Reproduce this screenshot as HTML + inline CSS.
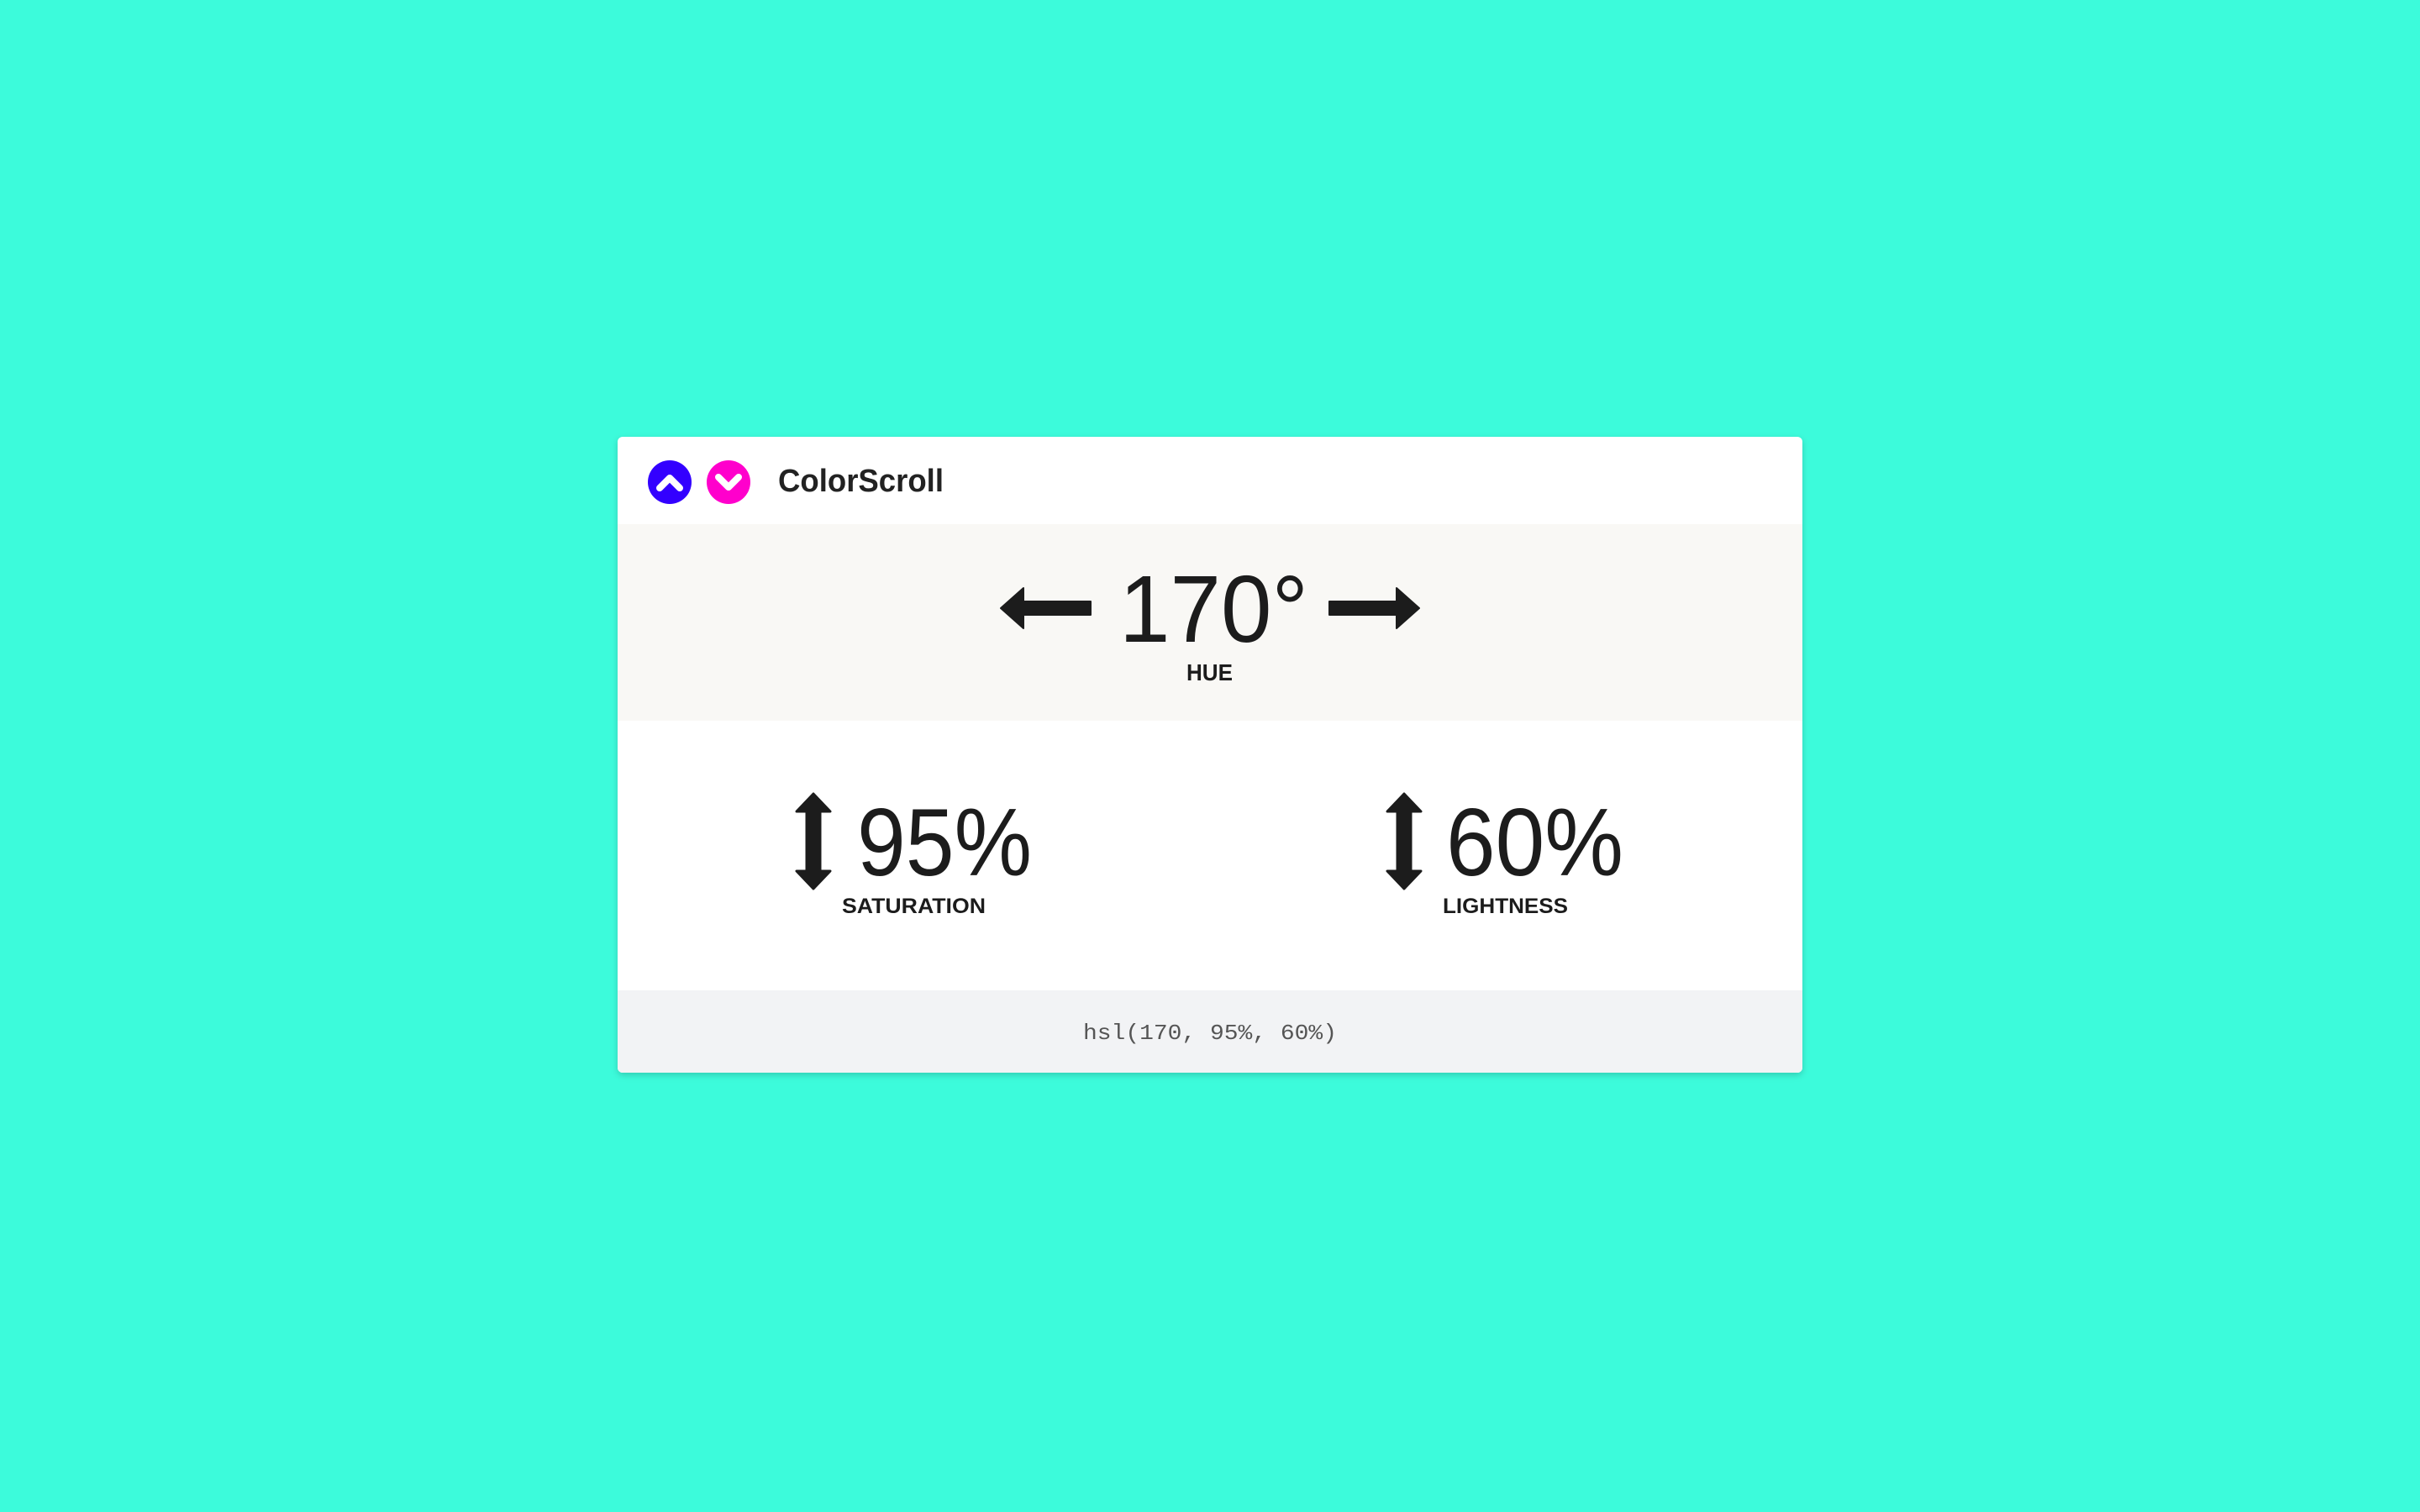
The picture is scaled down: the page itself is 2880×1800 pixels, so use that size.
<!DOCTYPE html>
<html><head><meta charset="utf-8"><style>
html,body{margin:0;padding:0;width:2880px;height:1800px;overflow:hidden;background:#3cfbdb}
</style></head><body>
<svg width="2880" height="1800" viewBox="0 0 2880 1800" xmlns="http://www.w3.org/2000/svg" style="position:absolute;left:0;top:0">
<defs><filter id="sh" x="-5%" y="-5%" width="110%" height="115%"><feDropShadow dx="0" dy="3" stdDeviation="4" flood-color="#000" flood-opacity="0.18"/></filter>
<clipPath id="cc"><rect x="735" y="520" width="1410" height="757" rx="6"/></clipPath></defs>
<rect x="735" y="520" width="1410" height="757" rx="6" fill="#fff" filter="url(#sh)"/>
<g clip-path="url(#cc)">
<rect x="735" y="624" width="1410" height="234" fill="#f9f8f5"/>
<rect x="735" y="1179" width="1410" height="98" fill="#f2f3f5"/>
</g>
<circle cx="797" cy="574" r="26" fill="#3300ff"/>
<path d="M785 581 L797 569 L809 581" stroke="#fff" stroke-width="8" fill="none" stroke-linecap="round" stroke-linejoin="round"/>
<circle cx="867" cy="574" r="26" fill="#ff00cc"/>
<path d="M855 568 L867 580 L879 568" stroke="#fff" stroke-width="8" fill="none" stroke-linecap="round" stroke-linejoin="round"/>
<text x="926" y="585" font-family="Liberation Sans, sans-serif" font-weight="bold" font-size="38" fill="#222" textLength="197" lengthAdjust="spacingAndGlyphs">ColorScroll</text>
<!-- hue arrows -->
<path d="M1191 724 L1218 700 L1218 716 L1298 716 L1298 732 L1218 732 L1218 748 Z" fill="#1c1c1c" stroke="#1c1c1c" stroke-width="2" stroke-linejoin="round"/>
<path d="M1689 724 L1662 700 L1662 716 L1582 716 L1582 732 L1662 732 L1662 748 Z" fill="#1c1c1c" stroke="#1c1c1c" stroke-width="2" stroke-linejoin="round"/>
<text x="1332" y="764" font-family="Liberation Sans, sans-serif" font-size="113" fill="#1c1c1c" textLength="225" lengthAdjust="spacingAndGlyphs">170°</text>
<text x="1412" y="810" font-family="Liberation Sans, sans-serif" font-weight="bold" font-size="28" fill="#1c1c1c" textLength="55" lengthAdjust="spacingAndGlyphs">HUE</text>
<!-- saturation -->
<path d="M968 945 L988 966 L976 966 L976 1037 L988 1037 L968 1058 L948 1037 L960 1037 L960 966 L948 966 Z" fill="#1c1c1c" stroke="#1c1c1c" stroke-width="3" stroke-linejoin="round"/>
<text x="1020" y="1042" font-family="Liberation Sans, sans-serif" font-size="114" fill="#1c1c1c" textLength="208" lengthAdjust="spacingAndGlyphs">95%</text>
<text x="1002" y="1087" font-family="Liberation Sans, sans-serif" font-weight="bold" font-size="25" fill="#1c1c1c" textLength="171" lengthAdjust="spacingAndGlyphs">SATURATION</text>
<!-- lightness -->
<path d="M1671 945 L1691 966 L1679 966 L1679 1037 L1691 1037 L1671 1058 L1651 1037 L1663 1037 L1663 966 L1651 966 Z" fill="#1c1c1c" stroke="#1c1c1c" stroke-width="3" stroke-linejoin="round"/>
<text x="1721" y="1042" font-family="Liberation Sans, sans-serif" font-size="114" fill="#1c1c1c" textLength="211" lengthAdjust="spacingAndGlyphs">60%</text>
<text x="1717" y="1087" font-family="Liberation Sans, sans-serif" font-weight="bold" font-size="25" fill="#1c1c1c" textLength="149" lengthAdjust="spacingAndGlyphs">LIGHTNESS</text>
<text x="1289" y="1237" font-family="Liberation Mono, monospace" font-size="26" fill="#555" textLength="302" lengthAdjust="spacingAndGlyphs">hsl(170, 95%, 60%)</text>
</svg>
</body></html>
